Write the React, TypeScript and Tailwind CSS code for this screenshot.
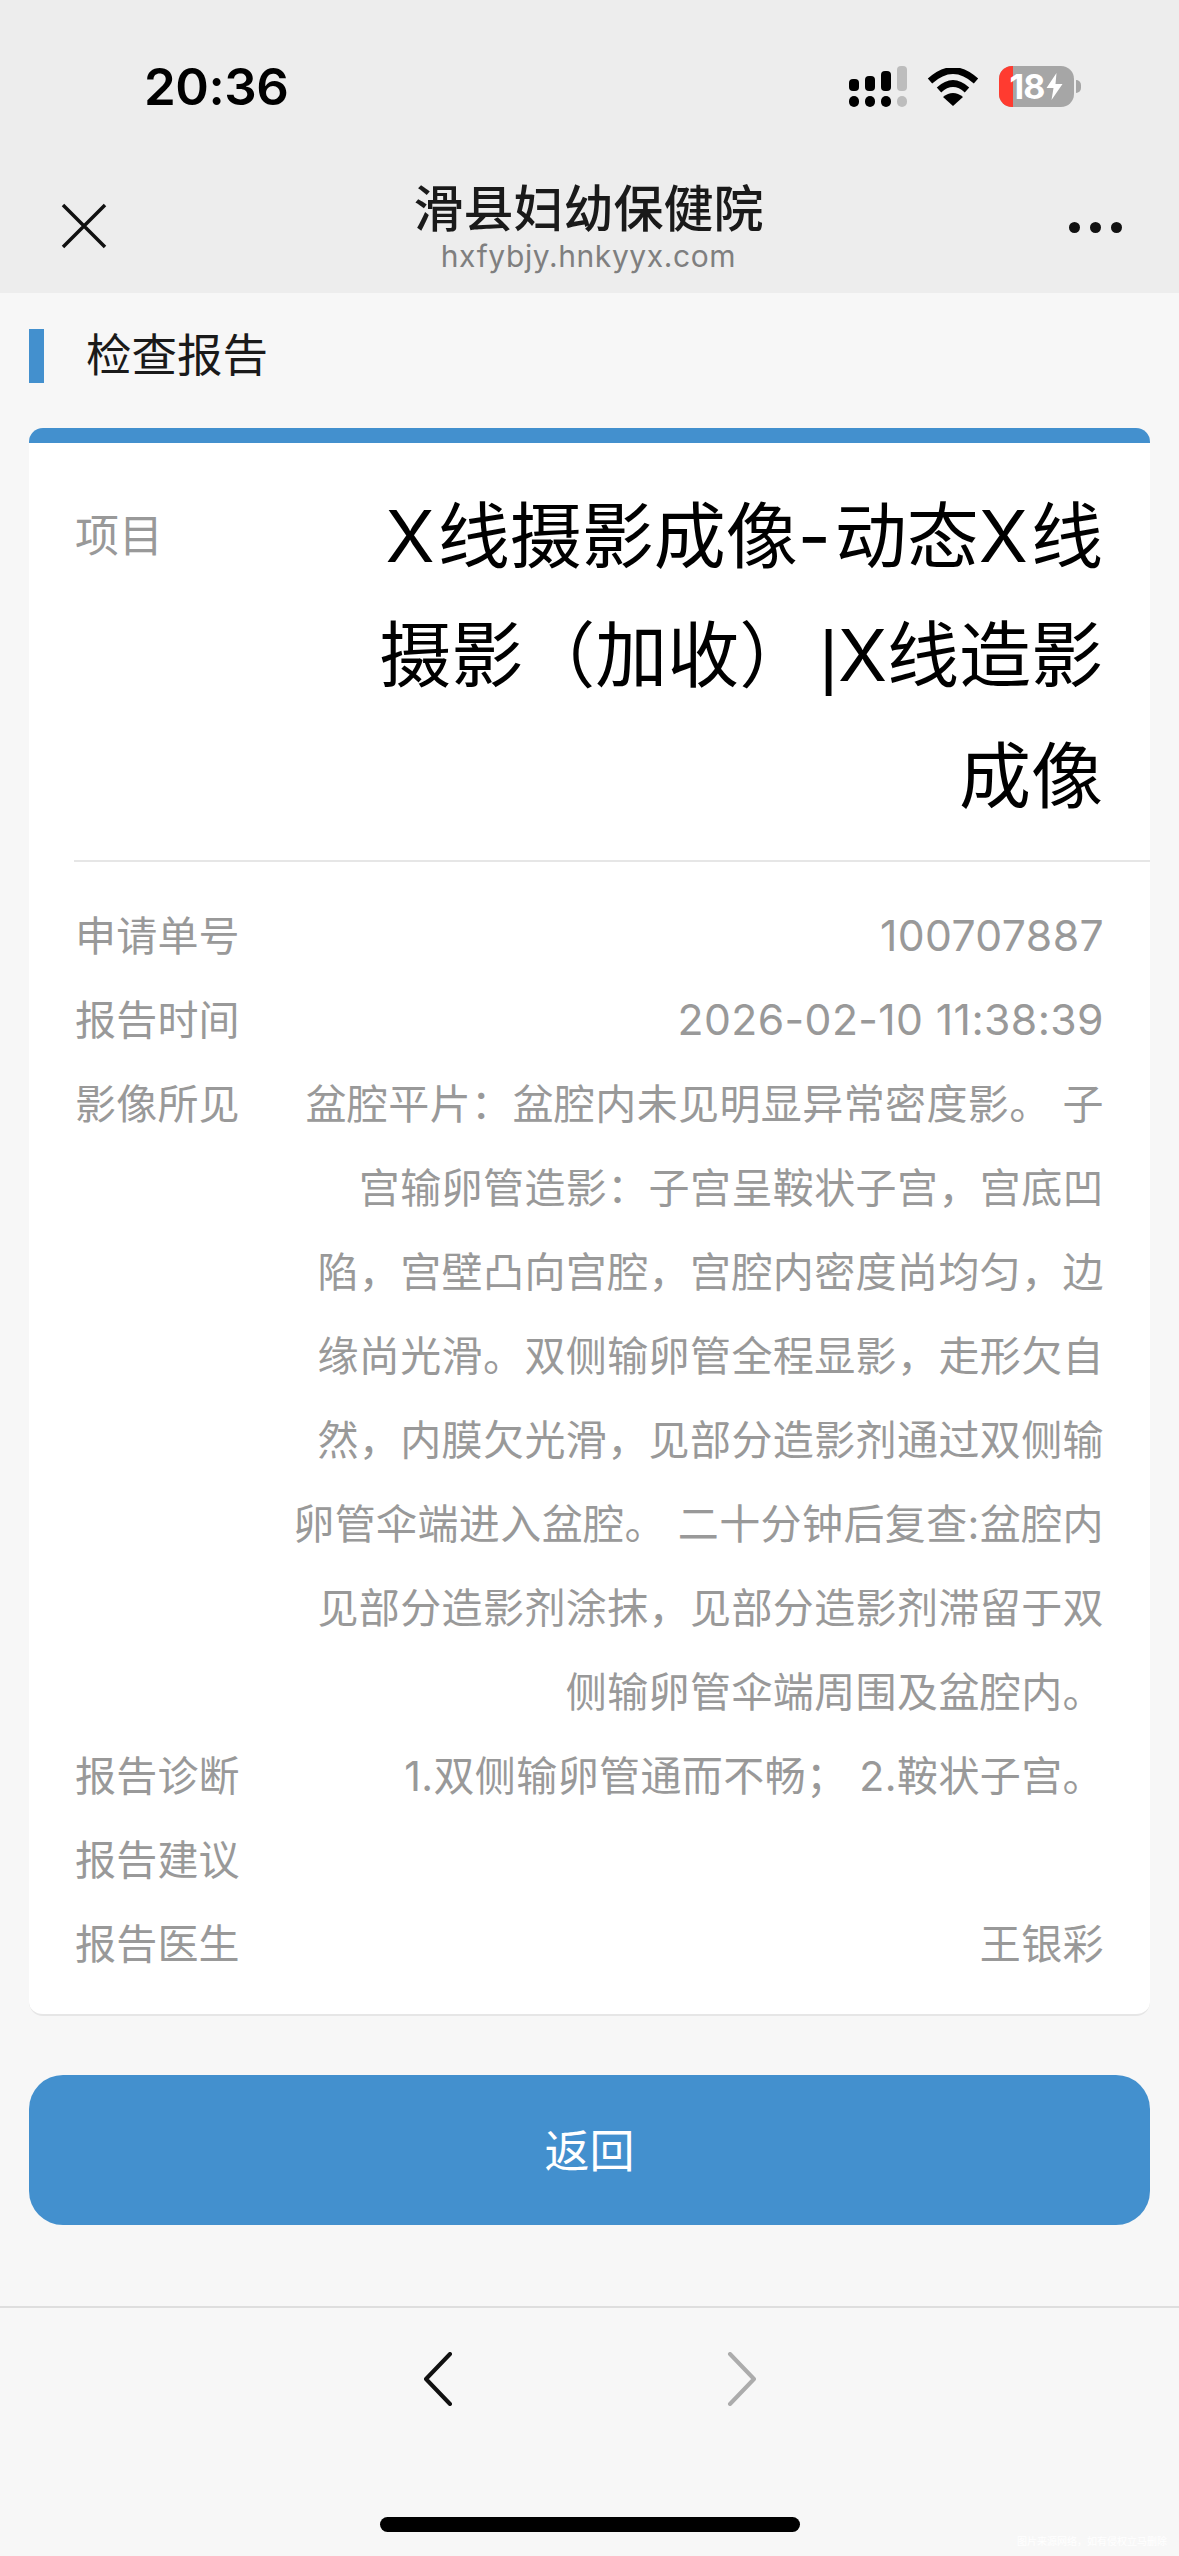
const bodyLines = [
  '盆腔平片：盆腔内未见明显异常密度影。 子',
  '宫输卵管造影：子宫呈鞍状子宫，宫底凹',
  '陷，宫壁凸向宫腔，宫腔内密度尚均匀，边',
  '缘尚光滑。双侧输卵管全程显影，走形欠自',
  '然，内膜欠光滑，见部分造影剂通过双侧输',
  '卵管伞端进入盆腔。 二十分钟后复查:盆腔内',
  '见部分造影剂涂抹，见部分造影剂滞留于双',
  '侧输卵管伞端周围及盆腔内。',
];

const rows: { label: string; lines: string[]; numeric?: boolean }[] = [
  { label: '申请单号', lines: ['100707887'], numeric: true },
  { label: '报告时间', lines: ['2026-02-10 11:38:39'], numeric: true },
  { label: '影像所见', lines: bodyLines },
  { label: '报告诊断', lines: ['1.双侧输卵管通而不畅； 2.鞍状子宫。'] },
  { label: '报告建议', lines: [] },
  { label: '报告医生', lines: ['王银彩'] },
];

function StatusIcons() {
  return (
    <div className="flex items-center gap-[20px]">
      <svg width="58" height="42" viewBox="0 0 58 42">
        <rect x="0" y="13" width="10" height="12" rx="4" fill="#000" />
        <rect x="16" y="10" width="10" height="15" rx="4" fill="#000" />
        <rect x="32" y="5" width="10" height="20" rx="4" fill="#000" />
        <rect x="48" y="0" width="10" height="25" rx="4" fill="#bdbdbd" />
        <rect x="0" y="30" width="10" height="11" rx="5" fill="#000" />
        <rect x="16" y="30" width="10" height="11" rx="5" fill="#000" />
        <rect x="32" y="30" width="10" height="11" rx="5" fill="#000" />
        <rect x="48" y="30" width="10" height="11" rx="5" fill="#bdbdbd" />
      </svg>
      <svg width="52" height="38" viewBox="0 0 52 38">
        <path d="M3 13 Q26 -8 49 13" fill="none" stroke="#000" strokeWidth="6.5" />
        <path d="M12 22 Q26 9 40 22" fill="none" stroke="#000" strokeWidth="6.5" />
        <path d="M26 38 L16 29 Q26 21 36 29 Z" fill="#000" />
      </svg>
      <div className="flex items-center gap-[2px]">
        <div className="relative flex h-[41px] w-[75px] items-center justify-center gap-[2px] overflow-hidden rounded-[13px] bg-[#a6a6a6]">
          <div className="absolute left-0 top-0 h-full w-[14px] bg-[#ff3b30]" />
          <span className="relative text-[34px] font-bold leading-none tracking-[-1px] text-white">18</span>
          <svg className="relative" width="17" height="27" viewBox="0 0 16 27">
            <path d="M10 0 L0 15 H7 L5 27 L16 11 H9 Z" fill="#fff" />
          </svg>
        </div>
        <div className="h-[13px] w-[5px] rounded-r-full bg-[#a6a6a6]" />
      </div>
    </div>
  );
}

function Row({ label, lines, numeric }: { label: string; lines: string[]; numeric?: boolean }) {
  return (
    <div className="flex justify-between">
      <div className="w-[170px] shrink-0 text-left tracking-[0.2px]">{label}</div>
      <div className={numeric ? 'min-h-[84px] whitespace-nowrap text-right text-[42.7px]' : 'min-h-[84px] whitespace-nowrap text-right'}>
        {lines.map((line) => (
          <div key={line}>{line}</div>
        ))}
      </div>
    </div>
  );
}

export default function App() {
  return (
    <div className="flex h-[2556px] w-[1179px] flex-col overflow-hidden bg-[#f7f7f7] font-['Inter','Noto_Sans_CJK_SC',sans-serif]">
      <header className="h-[293px] shrink-0 bg-[#ededed]">
        <div className="flex h-[174px] items-center justify-between pb-[1px] pl-[144px] pr-[98px]">
          <div className="text-[51px] font-semibold leading-none tracking-[-0.5px] text-black">20:36</div>
          <StatusIcons />
        </div>
        <div className="flex items-start justify-between pl-[60px] pr-[57px]">
          <svg className="mt-[28px]" width="48" height="48" viewBox="0 0 48 48">
            <path d="M3 3 L45 45 M45 3 L3 45" stroke="#111" strokeWidth="3.5" fill="none" />
          </svg>
          <div className="flex flex-col items-center pt-[8px]">
            <div className="text-[50px] font-medium leading-[55px] text-[#1a1a1a]">滑县妇幼保健院</div>
            <div className="text-[30px] leading-[38px] tracking-[0.6px] text-[#7f7f7f]">hxfybjy.hnkyyx.com</div>
          </div>
          <div className="mt-[48px] flex gap-[10px]">
            <div className="h-[11px] w-[11px] rounded-full bg-[#111]" />
            <div className="h-[11px] w-[11px] rounded-full bg-[#111]" />
            <div className="h-[11px] w-[11px] rounded-full bg-[#111]" />
          </div>
        </div>
      </header>

      <main className="flex-1 px-[29px]">
        <div className="mt-[36px] flex h-[54px] items-center gap-[42px]">
          <div className="h-full w-[15px] bg-[#4390ce]" />
          <div className="text-[45.5px] leading-none text-[#1a1a1a]">检查报告</div>
        </div>

        <section className="mt-[45px] overflow-hidden rounded-[14px] border-b-2 border-[#e6e6e6] border-t-[15px] border-t-[#4390ce] bg-white">
          <div className="flex items-start justify-between pl-[46px] pr-[47px] pt-[33px]">
            <div className="pt-[18px] text-[44px] leading-[84px] text-[#999]">项目</div>
            <div className="whitespace-nowrap pb-[25px] text-right text-[72px] leading-[119px] text-black">
              <div>
                <span className="tracking-[3px]">X</span>线摄影成像<span className="tracking-[4px]">-</span>动态<span className="tracking-[3px]">X</span>线
              </div>
              <div>
                摄影（加收）<span className="ml-[8px] font-['Liberation_Sans']">|</span>X线造影
              </div>
              <div>成像</div>
            </div>
          </div>
          <div className="ml-[45px] h-[2px] bg-[#e6e6e6]" />
          <div className="pb-[28px] pl-[46px] pr-[46px] pt-[32px] text-[41px] leading-[84px] tracking-[0.4px] text-[#999]">
            {rows.map((row) => (
              <Row key={row.label} label={row.label} lines={row.lines} numeric={row.numeric} />
            ))}
          </div>
        </section>

        <button className="mt-[59px] flex h-[150px] w-full items-center justify-center rounded-[34px] bg-[#4390ce] pt-[3px] text-[45px] text-white">
          返回
        </button>
      </main>

      <footer className="relative h-[250px] shrink-0 border-t-2 border-[#dedede]">
        <div className="flex h-[98px] items-end justify-center gap-[274px]">
          <svg width="30" height="54" viewBox="0 0 30 54">
            <path d="M27 2 L3 27 L27 52" fill="none" stroke="#111" strokeWidth="4" strokeLinecap="round" strokeLinejoin="round" />
          </svg>
          <svg width="30" height="54" viewBox="0 0 30 54">
            <path d="M3 2 L27 27 L3 52" fill="none" stroke="#acacac" strokeWidth="4" strokeLinecap="round" strokeLinejoin="round" />
          </svg>
        </div>
        <div className="absolute bottom-[24px] left-[380px] h-[15px] w-[420px] rounded-full bg-black" />
        <div className="absolute bottom-[10px] right-[12px] whitespace-nowrap text-[10px] leading-none text-white">图片来源网络，如有侵权立马删除</div>
      </footer>
    </div>
  );
}
